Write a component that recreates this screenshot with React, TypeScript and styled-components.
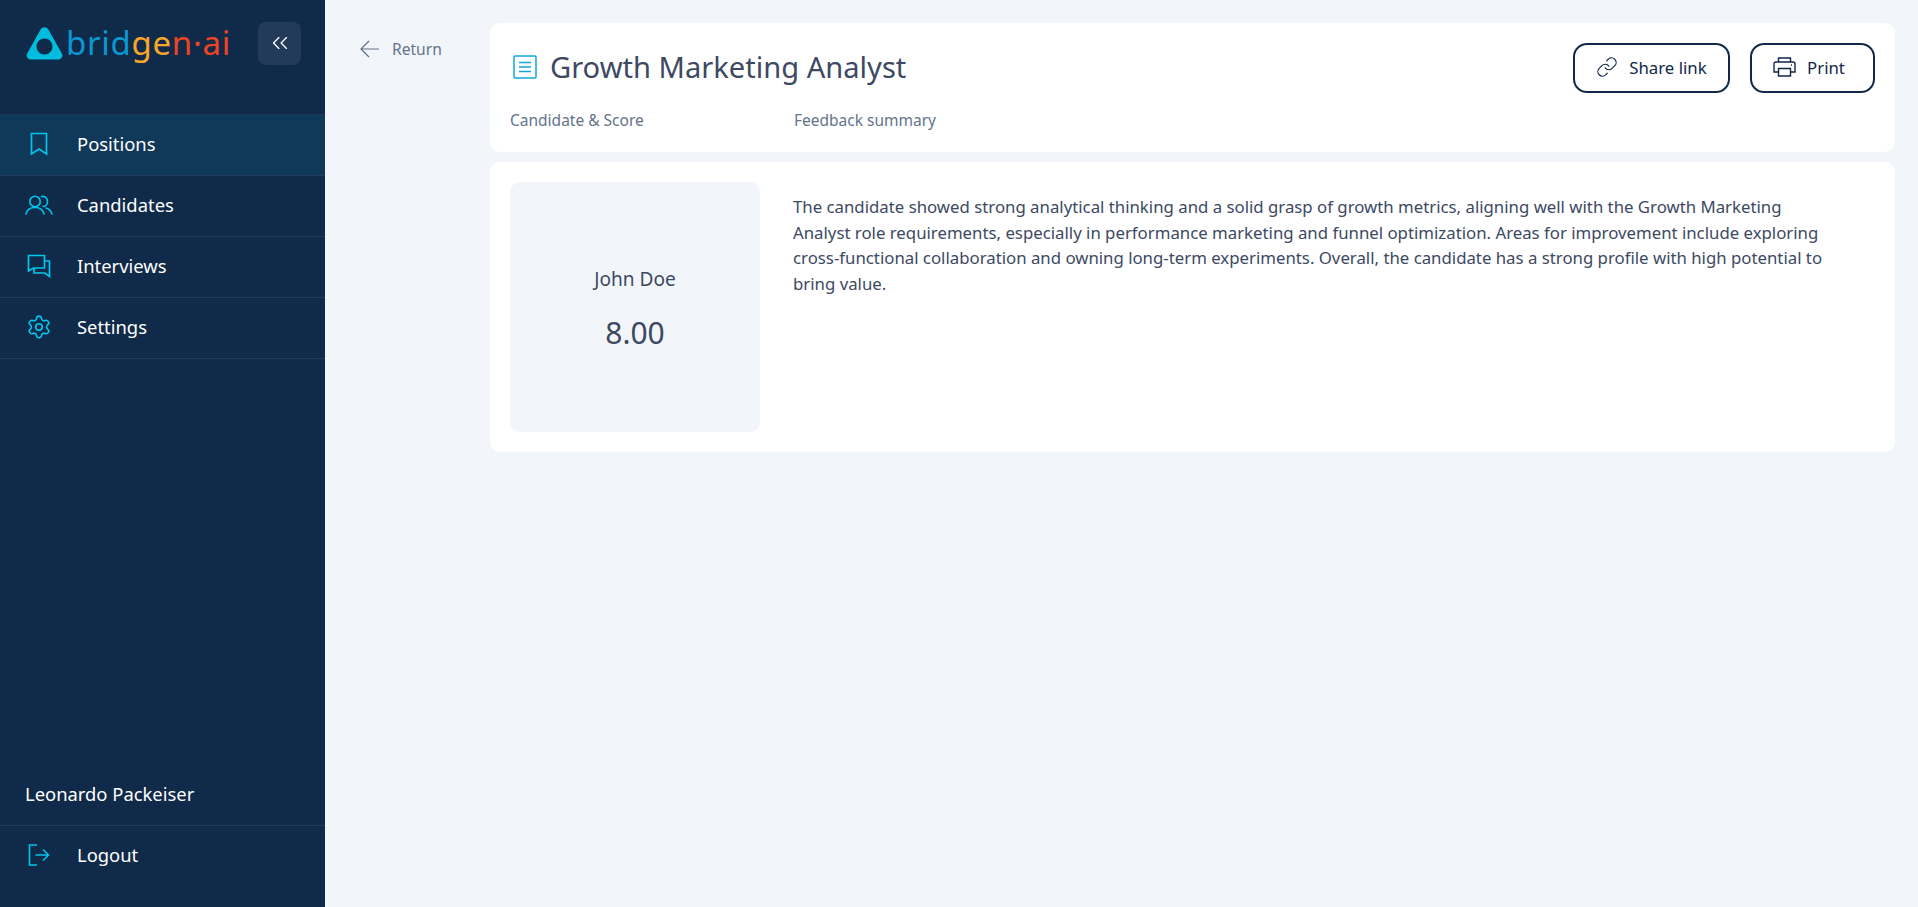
import React from 'react';
import styled, { createGlobalStyle } from 'styled-components';
import { Link, Settings, ChevronsLeft } from 'lucide-react';

const GlobalStyle = createGlobalStyle`
  html, body {
    margin: 0;
    padding: 0;
    height: 100%;
    background: #f2f6fb;
    font-family: 'Noto Sans', 'Lato', sans-serif;
  }
  * { box-sizing: border-box; }
`;

const Layout = styled.div`
  display: flex;
  height: 100vh;
  overflow: hidden;
`;

const Sidebar = styled.aside`
  width: 325px;
  flex-shrink: 0;
  background: #102a49;
  display: flex;
  flex-direction: column;
  color: #fff;
`;

const SidebarTop = styled.div`
  height: 114px;
  display: flex;
  align-items: flex-start;
  justify-content: space-between;
  padding: 22px 24px 0 26px;
`;

const Logo = styled.div`
  display: flex;
  align-items: center;
  gap: 3px;
  height: 43px;
`;

const LogoText = styled.span`
  font-size: 33px;
  line-height: 41px;
  letter-spacing: 0.7px;
  font-weight: 400;
  height: 43px;
`;

const LogoPart = styled.span<{ $color: string }>`
  color: ${({ $color }) => $color};
`;

const CollapseButton = styled.button`
  width: 43px;
  height: 43px;
  border: none;
  border-radius: 8px;
  background: #233b5b;
  color: #fff;
  display: flex;
  align-items: center;
  justify-content: center;
  padding: 0 0 2px;
`;

const NavList = styled.nav`
  display: flex;
  flex-direction: column;
  border-top: 1px solid #1d3a5c;
`;

const NavItem = styled.div<{ $active?: boolean }>`
  height: 61px;
  display: flex;
  align-items: center;
  padding: 0 0 2px 23px;
  border-bottom: 1px solid #233d5c;
  background: ${({ $active }) => ($active ? '#0f3859' : 'transparent')};
`;

const NavIcon = styled.span`
  width: 31px;
  height: 30px;
  margin-right: 23px;
  display: flex;
  align-items: center;
  justify-content: center;
  color: #00c5ee;
  flex-shrink: 0;
`;

const NavLabel = styled.span`
  font-size: 18.4px;
  padding-bottom: 2px;
  color: #fff;
`;

const SidebarFooter = styled.div`
  margin-top: auto;
`;

const UserName = styled.div`
  height: 60px;
  display: flex;
  align-items: center;
  padding: 0 0 4px 25px;
  font-size: 18.4px;
  border-bottom: 1px solid #233d5c;
`;

const LogoutItem = styled(NavItem)`
  border-bottom: none;
  height: 60px;
  padding-bottom: 2px;
  margin-bottom: 21px;
`;

const Main = styled.main`
  flex: 1;
  display: flex;
  padding: 23px 23px 0 0;
  min-width: 0;
`;

const ReturnColumn = styled.div`
  width: 165px;
  flex-shrink: 0;
  padding: 14px 0 0 35px;
`;

const ReturnLink = styled.a`
  display: flex;
  align-items: center;
  gap: 13px;
  height: 24px;
  font-size: 15.6px;
  color: #64748b;
`;

const Content = styled.div`
  flex: 1;
  display: flex;
  flex-direction: column;
  gap: 10px;
  min-width: 0;
`;

const Card = styled.section`
  background: #fff;
  border-radius: 10px;
`;

const HeaderCard = styled(Card)`
  height: 129px;
  padding: 20px 20px 0 20px;
`;

const HeaderRow = styled.div`
  display: flex;
  justify-content: space-between;
  align-items: flex-start;
`;

const TitleWrap = styled.div`
  display: flex;
  align-items: center;
  gap: 13px;
  height: 47px;
  padding-left: 3px;
`;

const Title = styled.h1`
  margin: 0;
  font-size: 29.1px;
  font-weight: 400;
  color: #3d4963;
`;

const Actions = styled.div`
  display: flex;
  gap: 20px;
`;

const ActionButton = styled.button<{ $width: number; $shift?: number }>`
  width: ${({ $width }) => $width}px;
  height: 50px;
  border: 2px solid #10294a;
  border-radius: 14px;
  background: #fff;
  color: #10294a;
  display: flex;
  align-items: center;
  justify-content: center;
  gap: 11px;
  font-family: inherit;
  font-size: 16.8px;
  padding: 0 ${({ $shift }) => $shift ?? 0}px 2px 0;
`;

const Tabs = styled.div`
  display: flex;
  margin-top: 16px;
`;

const Tab = styled.span<{ $width?: number }>`
  width: ${({ $width }) => ($width ? `${$width}px` : 'auto')};
  font-size: 15.5px;
  line-height: 22px;
  color: #64748b;
`;

const DetailCard = styled(Card)`
  height: 290px;
  padding: 20px;
  display: flex;
  gap: 33px;
`;

const ScoreBox = styled.div`
  width: 250px;
  height: 250px;
  flex-shrink: 0;
  border-radius: 10px;
  background: #f2f6fb;
  display: flex;
  flex-direction: column;
  align-items: center;
  justify-content: center;
  gap: 21px;
  color: #3d4963;
  padding-top: 4px;
`;

const CandidateName = styled.div`
  font-size: 19.1px;
  line-height: 26px;
`;

const Score = styled.div`
  font-size: 30px;
  line-height: 40px;
`;

const Summary = styled.p`
  margin: 12px 0 0;
  font-size: 16.8px;
  line-height: 25.6px;
  color: #3d4963;
`;

const LogoMark = () => (
  <svg width="37" height="33" viewBox="0 0 37 33">
    <path
      fillRule="evenodd"
      fill="#00bde0"
      d="M14.6 2.4c1.8-3 6-3 7.8 0l13.4 24c1.6 2.9-.4 6.200-3.800 6.200H5c-3.400 0-5.400-3.300-3.800-6.200zM18.500 11.500a8 8 0 1 0 .01 0z"
    />
  </svg>
);

const BookmarkIcon = () => (
  <svg width="18" height="24" viewBox="0 0 18 24" fill="none" stroke="currentColor" strokeWidth="1.7">
    <path d="M1.500 1.500h15v20.500L9 17l-7.500 5z" />
  </svg>
);

const UsersIcon = () => (
  <svg width="28" height="20" viewBox="0 0 28 20" fill="none" stroke="currentColor" strokeWidth="1.6" strokeLinecap="round">
    <circle cx="10" cy="6.500" r="5.200" />
    <path d="M1 19c1-4.500 4.500-6.500 9-6.500s8 2 9 6.500" />
    <path d="M16.500 1.500c3-.7 6 1.500 6 5s-2.500 5-4.500 5" />
    <path d="M21 13c3 .8 5 2.800 6 6" />
  </svg>
);

const ChatIcon = () => (
  <svg width="24" height="24" viewBox="0 0 24 24" fill="none" stroke="currentColor" strokeWidth="1.7">
    <path d="M1.500 1.500h16v12.500H6.500l-5 3z" />
    <path d="M17.500 7h5v15.500l-4.500-3.500H7v-5" />
  </svg>
);

const LogoutIcon = () => (
  <svg width="22" height="22" viewBox="0 0 22 22" fill="none" stroke="currentColor" strokeWidth="1.6">
    <path d="M9 1H1.500v20H9" />
    <path d="M7.500 11h13M15 5.500l5.500 5.500-5.500 5.500" />
  </svg>
);

const DocIcon = () => (
  <svg width="24" height="24" viewBox="0 0 24 24" fill="none" stroke="#10a8dc" strokeWidth="1.500">
    <rect x="1" y="1" width="22" height="22" rx="1" />
    <path d="M6 7.500h12M6 12h12M6 16.500h12" />
  </svg>
);

const BackArrow = () => (
  <svg width="19" height="18" viewBox="0 0 19 18" fill="none" stroke="#64708a" strokeWidth="1.200">
    <path d="M19 9H1M9 1L1 9l8 8" />
  </svg>
);

const PrinterIcon = () => (
  <svg width="23" height="20" viewBox="0 0 23 20" fill="none" stroke="currentColor" strokeWidth="1.400">
    <path d="M5.500 5V1h12v4" />
    <path d="M5.500 15H1V7c0-1.200.8-2 2-2h17c1.200 0 2 .8 2 2v8h-4.500" />
    <path d="M5.500 11.500h12V19h-12z" />
    <path d="M18 8h1" />
  </svg>
);

const App: React.FC = () => (
  <Layout>
    <GlobalStyle />
    <Sidebar>
      <SidebarTop>
        <Logo>
          <LogoMark />
          <LogoText>
            <LogoPart $color="#0a97d3">brid</LogoPart>
            <LogoPart $color="#f9a62b">ge</LogoPart>
            <LogoPart $color="#ef4423">n·ai</LogoPart>
          </LogoText>
        </Logo>
        <CollapseButton aria-label="Collapse menu">
          <ChevronsLeft size={26} strokeWidth={1.2} />
        </CollapseButton>
      </SidebarTop>
      <NavList>
        <NavItem $active>
          <NavIcon><BookmarkIcon /></NavIcon>
          <NavLabel>Positions</NavLabel>
        </NavItem>
        <NavItem>
          <NavIcon><UsersIcon /></NavIcon>
          <NavLabel>Candidates</NavLabel>
        </NavItem>
        <NavItem>
          <NavIcon><ChatIcon /></NavIcon>
          <NavLabel>Interviews</NavLabel>
        </NavItem>
        <NavItem>
          <NavIcon><Settings size={26} strokeWidth={1.5} /></NavIcon>
          <NavLabel>Settings</NavLabel>
        </NavItem>
      </NavList>
      <SidebarFooter>
        <UserName>Leonardo Packeiser</UserName>
        <LogoutItem>
          <NavIcon><LogoutIcon /></NavIcon>
          <NavLabel>Logout</NavLabel>
        </LogoutItem>
      </SidebarFooter>
    </Sidebar>
    <Main>
      <ReturnColumn>
        <ReturnLink><BackArrow />Return</ReturnLink>
      </ReturnColumn>
      <Content>
        <HeaderCard>
          <HeaderRow>
            <TitleWrap>
              <DocIcon />
              <Title>Growth Marketing Analyst</Title>
            </TitleWrap>
            <Actions>
              <ActionButton $width={157}><Link size={22} strokeWidth={1.3} />Share link</ActionButton>
              <ActionButton $width={125} $shift={7}><PrinterIcon />Print</ActionButton>
            </Actions>
          </HeaderRow>
          <Tabs>
            <Tab $width={284}>Candidate &amp; Score</Tab>
            <Tab>Feedback summary</Tab>
          </Tabs>
        </HeaderCard>
        <DetailCard>
          <ScoreBox>
            <CandidateName>John Doe</CandidateName>
            <Score>8.00</Score>
          </ScoreBox>
          <Summary>
            The candidate showed strong analytical thinking and a solid grasp of growth metrics, aligning well with the Growth Marketing<br />
            Analyst role requirements, especially in performance marketing and funnel optimization. Areas for improvement include exploring<br />
            cross-functional collaboration and owning long-term experiments. Overall, the candidate has a strong profile with high potential to<br />
            bring value.
          </Summary>
        </DetailCard>
      </Content>
    </Main>
  </Layout>
);

export default App;
